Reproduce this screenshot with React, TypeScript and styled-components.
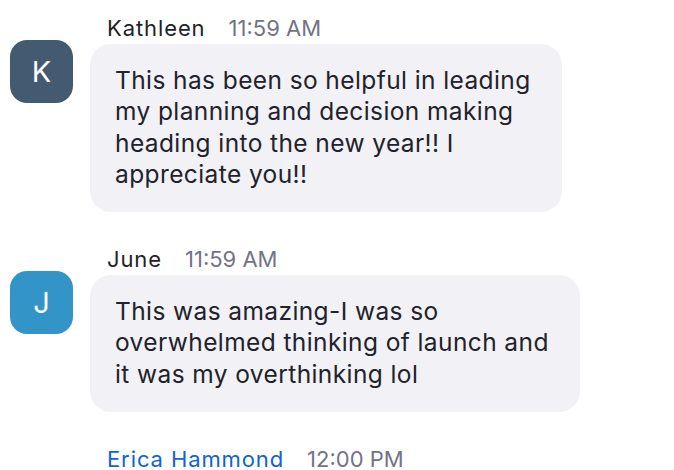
import styled, { createGlobalStyle } from 'styled-components';

const GlobalStyle = createGlobalStyle`
    html, body {
        margin: 0;
        padding: 0;
        background: #FFFFFF;
    }
    body {
        font-family: Inter, "Noto Sans", "Liberation Sans", sans-serif;
        color: #1f1f29;
        -webkit-font-smoothing: antialiased;
    }
`;

const Chat = styled.div`
    width: 674px;
    height: 470px;
    overflow: hidden;
    padding-top: 13px;
    box-sizing: border-box;
    display: flex;
    flex-direction: column;
    gap: 32px;
`;

const Message = styled.div`
    display: flex;
    align-items: flex-start;
`;

const Avatar = styled.div<{ $color: string }>`
    flex: none;
    width: 63px;
    height: 63px;
    margin: 27px 17px 0 10px;
    border-radius: 17px;
    background: ${p => p.$color};
    color: #FFFFFF;
    display: flex;
    align-items: center;
    justify-content: center;
    font-size: 29px;
    font-weight: 400;
`;

const Spacer = styled.div`
    flex: none;
    width: 90px;
`;

const Body = styled.div`
    display: flex;
    flex-direction: column;
    align-items: flex-start;
`;

const Header = styled.div`
    display: flex;
    align-items: baseline;
    gap: 23px;
    height: 30px;
    line-height: 30px;
    padding-left: 17px;
    margin-bottom: 1px;
    font-size: 22px;
    white-space: nowrap;
`;

const Name = styled.span<{ $link?: boolean }>`
    letter-spacing: 0.9px;
    color: ${p => (p.$link ? '#0f63d3' : '#1f1f29')};
`;

const Time = styled.span`
    color: #737385;
`;

const Bubble = styled.div`
    background: #f1f1f6;
    border-radius: 21px;
    padding: 21px 31px 22px 25px;
    font-size: 24.5px;
    line-height: 31.3px;
    letter-spacing: 0.4px;
    white-space: pre-line;
    color: #22222c;
`;

type Msg = {
    name: string;
    time: string;
    initial?: string;
    color?: string;
    link?: boolean;
    text?: string;
};

const messages: Msg[] = [
    {
        name: 'Kathleen',
        time: '11:59 AM',
        initial: 'K',
        color: '#445a70',
        text: 'This has been so helpful in leading\nmy planning and decision making\nheading into the new year!! I\nappreciate you!!',
    },
    {
        name: 'June',
        time: '11:59 AM',
        initial: 'J',
        color: '#3394c7',
        text: 'This was amazing-I was so\noverwhelmed thinking of launch and\nit was my overthinking lol',
    },
    {
        name: 'Erica Hammond',
        time: '12:00 PM',
        link: true,
    },
];

const App = () => {
    return (
        <>
            <GlobalStyle />
            <Chat>
                {messages.map(m => (
                    <Message key={m.name}>
                        {m.initial ? <Avatar $color={m.color!}>{m.initial}</Avatar> : <Spacer />}
                        <Body>
                            <Header>
                                <Name $link={m.link}>{m.name}</Name>
                                <Time>{m.time}</Time>
                            </Header>
                            {m.text && <Bubble>{m.text}</Bubble>}
                        </Body>
                    </Message>
                ))}
            </Chat>
        </>
    );
};

export default App;
